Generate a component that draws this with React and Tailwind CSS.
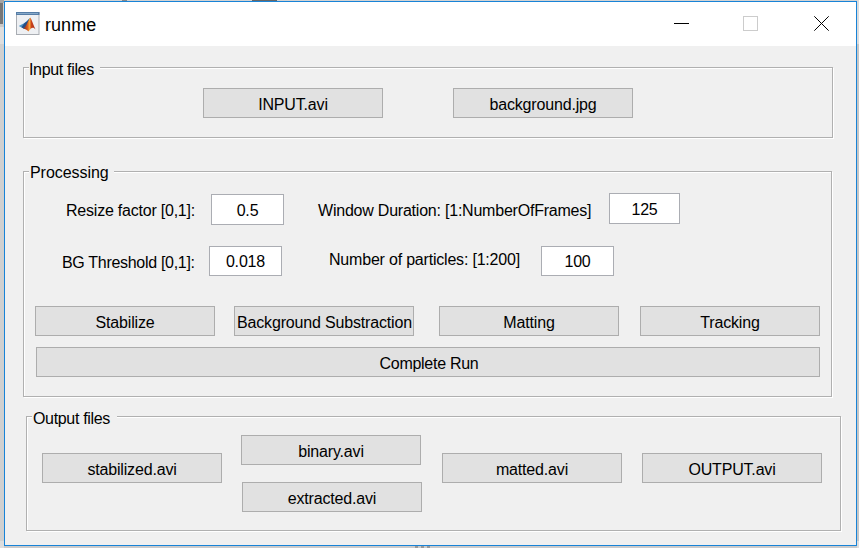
function Button({ className = "w-[180px]", children }) {
  return (
    <button
      className={`flex h-[30px] shrink-0 items-center justify-center whitespace-nowrap border border-[#adadad] bg-[#e1e1e1] pt-1 leading-[18px] ${className}`}
    >
      {children}
    </button>
  );
}

function Field({ className, children }) {
  return (
    <div
      className={`flex shrink-0 items-center justify-center border border-[#abadb3] bg-white pt-0.5 leading-[18px] ${className}`}
    >
      {children}
    </div>
  );
}

function Label({ className, children }) {
  return <div className={`shrink-0 whitespace-nowrap leading-[18px] ${className}`}>{children}</div>;
}

function Panel({ title, className, legendClass, children }) {
  return (
    <section
      className={`flex flex-col border border-[#b0b0b0] shadow-[1px_1px_0_#fff,inset_1px_1px_0_#fff] ${className}`}
    >
      <h2 className={`-mt-2 h-[18px] shrink-0 whitespace-nowrap bg-[#f0f0f0] ${legendClass}`}>{title}</h2>
      {children}
    </section>
  );
}

function AppIcon() {
  return (
    <svg className="h-[23px] w-[24px]" viewBox="0 0 24 23">
      <defs>
        <linearGradient id="flame" x1="0" x2="1">
          <stop offset="0" stopColor="#7a2018" />
          <stop offset="0.35" stopColor="#d85a1c" />
          <stop offset="0.52" stopColor="#f6a53a" />
          <stop offset="0.68" stopColor="#c8421c" />
          <stop offset="1" stopColor="#a52a18" />
        </linearGradient>
      </defs>
      <rect x="0.5" y="0.5" width="22.5" height="22" fill="#eef0f3" stroke="#a9adb3" />
      <rect x="0" y="0" width="23.5" height="3" fill="#567da6" />
      <rect x="1" y="1" width="21" height="1" fill="#86a9c9" />
      <path d="M2.8 14 L8.5 11 L14 6 L10 16 L7.5 16.5 Z" fill="#4a93c4" />
      <path d="M8.5 11 L11 9.5 L14 6 L11 14 L7.5 16.5 L5.5 15.2 Z" fill="#274f86" />
      <path d="M7 16.5 C10 16 11.5 9 14.3 5.5 C16 8 17 12.5 19.5 17.5 C17.5 15 15.5 15 12.5 19.5 C11 18 10 17 7 16.5 Z" fill="url(#flame)" />
    </svg>
  );
}

function TitleBar() {
  return (
    <header className="flex h-11 shrink-0 items-start bg-white">
      <div className="ml-[11px] mt-2.5">
        <AppIcon />
      </div>
      <h1 className="ml-[5px] mt-3 w-[629px] text-[18px] leading-[22px] tracking-[0.05px]">runme</h1>
      <svg className="mt-3.5 h-4 w-[156px]" viewBox="0 0 156 16" fill="none">
        <path d="M0 7.5H15" stroke="#000" />
        <rect x="69.5" y="0.5" width="14" height="14" stroke="#ccc" />
        <path d="M140.3 0.3L154.7 14.7M154.7 0.3L140.3 14.7" stroke="#000" />
      </svg>
    </header>
  );
}

export default function App() {
  return (
    <div className="flex h-[548px] w-[859px] overflow-hidden bg-[#cbcbcb] font-['Liberation_Sans',Arial,sans-serif] text-[16px] tracking-[-0.17px] text-black">
      <div className="flex w-1 shrink-0 flex-col bg-[#d0d0d0]">
        <div className="h-[3px] bg-[#a5a5a5]" />
        <div className="h-[21px] w-[3px] bg-[#777]" />
        <div className="h-[3px] bg-[#c9c9c9]" />
        <div className="h-[17px] bg-[#dedede]" />
        <div className="grow" />
        <div className="h-[7px] bg-[#dddddd]" />
      </div>
      <div className="flex w-[853px] shrink-0 flex-col">
        <div className="flex h-px shrink-0 bg-[#d3d3d3]">
          <div className="ml-[118px] h-px w-[5px] bg-[#888]" />
          <div className="ml-[125px] h-px w-[25px] bg-[#666]" />
        </div>
        <div className="flex h-[545px] shrink-0 flex-col border border-[#1883d7] bg-[#f0f0f0]">
          <TitleBar />
          <main className="flex flex-col">
            <Panel
              title="Input files"
              className="ml-[18px] mt-[21px] h-[71px] w-[810px]"
              legendClass="ml-[5px] w-[71px] leading-[20px] tracking-[-0.33px]"
            >
              <div className="ml-[179px] mt-2.5 flex gap-[70px]">
                <Button>INPUT.avi</Button>
                <Button>background.jpg</Button>
              </div>
            </Panel>

            <Panel
              title="Processing"
              className="ml-[18px] mt-[33px] h-[226px] w-[809px]"
              legendClass="ml-[5px] w-[85px] pl-px leading-[18px] tracking-[-0.05px]"
            >
              <div className="mt-[11px] flex h-8 items-start">
                <Label className="ml-[42px] mt-[9px] w-[145px] tracking-[-0.22px]">Resize factor [0,1]:</Label>
                <Field className="mt-px h-[31px] w-[73px]">0.5</Field>
                <Label className="ml-[34px] mt-[9px] w-[291px] tracking-[-0.22px]">Window Duration: [1:NumberOfFrames]</Label>
                <Field className="h-[31px] w-[71px]">125</Field>
              </div>
              <div className="mt-[21px] flex h-[30px] items-start">
                <Label className="ml-[38px] mt-2 w-[147px] tracking-[-0.3px]">BG Threshold [0,1]:</Label>
                <Field className="h-[30px] w-[73px]">0.018</Field>
                <Label className="ml-[47px] mt-[5px] w-[212px] tracking-[-0.2px]">Number of particles: [1:200]</Label>
                <Field className="h-[30px] w-[73px]">100</Field>
              </div>
              <div className="ml-[11px] mt-[30px] flex">
                <Button>Stabilize</Button>
                <Button className="ml-[19px] w-[180px] pl-px">Background Substraction</Button>
                <Button className="ml-[25px] w-[180px]">Matting</Button>
                <Button className="ml-[21px] w-[180px]">Tracking</Button>
              </div>
              <Button className="ml-3 mt-[11px] w-[784px] pl-0.5 tracking-[-0.28px]">Complete Run</Button>
            </Panel>

            <Panel
              title="Output files"
              className="ml-[21px] mt-[19px] h-[115px] w-[815px]"
              legendClass="ml-[5px] w-[85px] pl-px leading-[20px] tracking-[-0.33px]"
            >
              <div className="ml-[15px] mt-2 flex items-start">
                <Button className="mt-[18px] w-[180px]">stabilized.avi</Button>
                <div className="ml-[19px] flex flex-col gap-[17px]">
                  <Button>binary.avi</Button>
                  <Button className="ml-px w-[180px]">extracted.avi</Button>
                </div>
                <Button className="ml-5 mt-[18px] w-[180px]">matted.avi</Button>
                <Button className="ml-5 mt-[18px] w-[180px]">OUTPUT.avi</Button>
              </div>
            </Panel>
          </main>
        </div>
        <div className="flex h-0.5 shrink-0 gap-[3px] bg-[#cbcbcb] pl-[411px]">
          <div className="w-[3px] bg-[#999]" />
          <div className="w-[3px] bg-[#999]" />
          <div className="w-[3px] bg-[#999]" />
        </div>
      </div>
      <div className="flex w-0.5 flex-col">
        <div className="h-11 bg-[#dcdcdc]" />
        <div className="h-[497px] bg-[#c6c6c6]" />
        <div className="grow bg-[#dedede]" />
      </div>
    </div>
  );
}
